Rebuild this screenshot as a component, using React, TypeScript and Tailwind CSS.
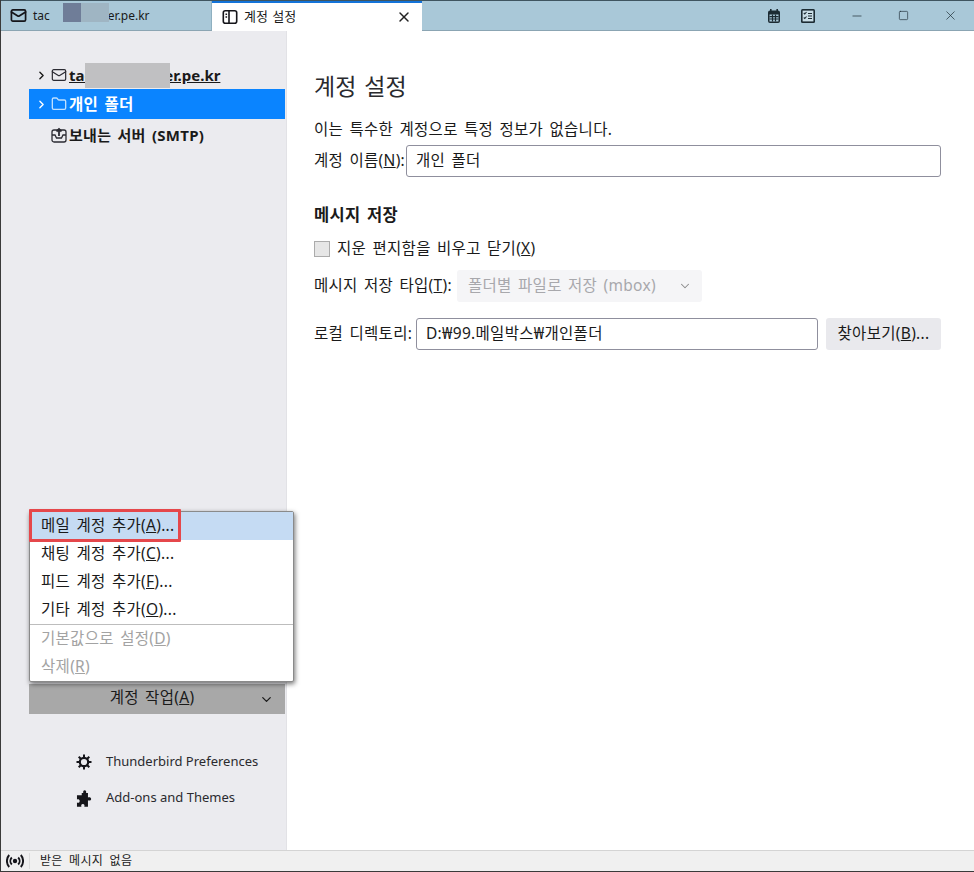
import { ChevronDown, ChevronRight, Folder, Mail, Minus, Square, X } from "lucide-react";

const FONT = "font-['Noto_Sans','Noto_Sans_CJK_KR',sans-serif]";

function CalendarIcon() {
  return (
    <svg width="16" height="16" viewBox="0 0 16 16" fill="none">
      <path d="M2 4.5a2 2 0 0 1 2-2h8a2 2 0 0 1 2 2V13a2 2 0 0 1-2 2H4a2 2 0 0 1-2-2z" fill="#1c2b33" />
      <rect x="4" y="1" width="1.6" height="3" fill="#1c2b33" />
      <rect x="10.4" y="1" width="1.6" height="3" fill="#1c2b33" />
      <path d="M3.5 6.5h9v7h-9z" fill="#a9c8d8" />
      <path d="M3.5 8.7h9M3.5 11h9M6.5 6.5v7M9.5 6.5v7" stroke="#1c2b33" strokeWidth="1.2" />
    </svg>
  );
}

function TasksIcon() {
  return (
    <svg width="16" height="16" viewBox="0 0 16 16" fill="none">
      <rect x="1" y="1" width="14" height="14" rx="1.5" fill="#1c2b33" />
      <rect x="2.6" y="2.6" width="10.8" height="10.8" fill="#c9dde6" />
      <path d="M3.8 5l1 1 1.7-2M3.8 9.5l1 1 1.7-2" stroke="#1c2b33" strokeWidth="1.1" />
      <path d="M8 5.5h4M8 8h4M8 10.5h4" stroke="#1c2b33" strokeWidth="1.1" />
    </svg>
  );
}

function SettingsTabIcon() {
  return (
    <svg width="16" height="16" viewBox="0 0 16 16" fill="none" stroke="#15151a" strokeWidth="1.6">
      <rect x="1.3" y="1.8" width="13.4" height="12.4" rx="2" />
      <path d="M7 2v12M3.5 5.2h1.6M3.5 8h1.6" />
    </svg>
  );
}

function OutboxIcon() {
  return (
    <svg width="16" height="16" viewBox="0 0 16 16" fill="none" stroke="#2b2b33" strokeWidth="1.3">
      <rect x="1" y="3" width="14" height="12" rx="2" />
      <path d="M1 8h3l1.500 3h5L12 8h3" />
      <path d="M8 9V2M5.500 4.500L8 2l2.500 2.500" strokeWidth="1.8" />
    </svg>
  );
}

function GearIcon() {
  return (
    <svg width="16" height="16" viewBox="0 0 16 16" fill="none">
      <circle cx="8" cy="8" r="4.2" stroke="#15151a" strokeWidth="2.2" />
      <path d="M8 .5v3M8 12.500v3M.5 8h3M12.500 8h3M2.700 2.700l2.100 2.100M11.200 11.200l2.100 2.100M2.700 13.300l2.100-2.100M11.200 4.800l2.100-2.100" stroke="#15151a" strokeWidth="2" />
    </svg>
  );
}

function PuzzleIcon() {
  return (
    <svg width="16" height="17" viewBox="0.5 0.3 13 15" fill="#15151a">
      <path d="M5 3h1.400C6 1.800 6.400.5 7.600.5S9.200 1.800 8.800 3H10.500v4c1.200-.5 2.800-.2 2.800 1.200s-1.600 1.700-2.800 1.200V15H7.300c.4-1.200 0-2.300-1.300-2.300S4.300 13.800 4.700 15H.8v-3.600c1 .4 2.400.2 2.400-1.400S1.800 8.100.8 8.600V5H5z" />
    </svg>
  );
}

function SignalIcon() {
  return (
    <svg width="18" height="16" viewBox="0 0 18 16" fill="none" stroke="#15151a" strokeWidth="1.9">
      <circle cx="9" cy="8" r="2.200" fill="#15151a" stroke="none" />
      <path d="M5.800 4.500a5 5 0 0 0 0 7M12.200 4.500a5 5 0 0 1 0 7M3.200 2a9 9 0 0 0 0 12M14.800 2a9 9 0 0 1 0 12" />
    </svg>
  );
}

function MenuItem({ label, mnemonic, tail, disabled, active }: { label: string; mnemonic: string; tail?: string; disabled?: boolean; active?: boolean }) {
  return (
    <div className={`flex h-[28px] items-center whitespace-pre pl-[11px] ${disabled ? "text-[#a3a3a3]" : "text-[#1a1a1a]"} ${active ? "bg-[#c5dbf3]" : ""}`}>
      <span>{label}(<u>{mnemonic}</u>){tail}</span>
    </div>
  );
}

export default function App() {
  return (
    <div className={`${FONT} relative flex h-[872px] w-[974px] flex-col overflow-hidden border-b border-l border-[#3a3a3a] bg-white text-[15.5px] tracking-[0.3px] text-[#1a1a1a] [word-spacing:2px]`}>
      {/* tab bar */}
      <div className="flex h-[31px] shrink-0 border-b border-t border-[#3f5560] border-b-[#8ba5b3] bg-[#a9c8d8] text-[13px] tracking-normal [word-spacing:0]">
        <div className="relative flex w-[211px] items-center border-r border-[#8fb0c0] pl-[9px] text-[12px]">
          <Mail size={17} strokeWidth={2.4} color="#15151a" />
          <span className="ml-[6px]">tac</span>
          <span className="w-[58px]" />
          <span>er.pe.kr</span>
          <div className="absolute left-[62px] top-[2px] flex h-[19px] w-[46px]">
            <div className="w-[18px] bg-[#6f7d98]" />
            <div className="w-[28px] bg-[#9fb5c3]" />
          </div>
        </div>
        <div className="-mb-px flex w-[210px] items-center border-t-2 border-[#1373d9] bg-white px-[10px]">
          <SettingsTabIcon />
          <span className="ml-[6px] flex-1 [word-spacing:1px]">계정 설정</span>
          <X size={16} strokeWidth={2.2} color="#222" />
        </div>
        <div className="flex-1" />
        <div className="flex items-center gap-[18px] pr-[2px]">
          <CalendarIcon />
          <TasksIcon />
        </div>
        <div className="ml-[15px] flex items-center text-[#1c2b33]">
          <div className="flex w-[47px] justify-center"><Minus size={14} strokeWidth={1.2} /></div>
          <div className="flex w-[47px] justify-center"><Square size={11} strokeWidth={1.4} /></div>
          <div className="flex w-[47px] justify-center"><X size={15} strokeWidth={1.1} /></div>
        </div>
      </div>

      <div className="flex min-h-0 flex-1">
        {/* sidebar */}
        <aside className="flex w-[286px] shrink-0 flex-col border-r border-[#e2e2e6] bg-[#ebebef] pl-[28px] pr-[1px]">
          <div className="pt-[30px]">
            <div className="relative flex h-[28px] items-center text-[15px] font-bold tracking-normal">
              <ChevronRight size={13} strokeWidth={2.5} className="ml-[6px]" />
              <Mail size={16} strokeWidth={1.8} className="ml-[3px] text-[#2b2b33]" />
              <span className="ml-[2px] underline">tac</span>
              <span className="w-[72px]" />
              <span className="underline">er.pe.kr</span>
              <div className="absolute left-[56px] top-[2px] h-[25px] w-[85px] bg-[#c0c0c2]" />
            </div>
            <div className="flex h-[30px] items-center bg-[#0a84ff] font-bold text-white">
              <ChevronRight size={13} strokeWidth={2.5} className="ml-[6px]" />
              <Folder size={16} strokeWidth={2} className="ml-[3px] text-[#bfe0ff]" />
              <span className="ml-[2px] pt-[2px]">개인 폴더</span>
            </div>
            <div className="flex h-[32px] items-center text-[15px] font-bold tracking-[0.3px]">
              <span className="ml-[22px]"><OutboxIcon /></span>
              <span className="ml-[2px]">보내는 서버 (SMTP)</span>
            </div>
          </div>
          <div className="flex-1" />
          <div className="flex h-[30px] w-[256px] items-center bg-[#a8a8a8] pr-[11px]">
            <span className="flex-1 pb-[2px] pl-[16px] text-center">계정 작업(<u>A</u>)</span>
            <ChevronDown size={15} strokeWidth={2} />
          </div>
          <div className="mt-[30px] flex h-[36px] items-center pl-[47px] text-[13px] tracking-normal text-[#2a2a2e] [word-spacing:0]">
            <GearIcon />
            <span className="ml-[14px]">Thunderbird Preferences</span>
          </div>
          <div className="flex h-[36px] items-center pl-[47px] text-[13px] tracking-normal text-[#2a2a2e] [word-spacing:0]">
            <PuzzleIcon />
            <span className="ml-[14px]">Add-ons and Themes</span>
          </div>
          <div className="h-[34px]" />
        </aside>

        {/* settings page */}
        <main className="flex-1 pl-[27px] pr-[33px] pt-[38px]">
          <h1 className="h-[34px] text-[23px] leading-[34px] tracking-normal text-[#2a2a2e]">계정 설정</h1>
          <p className="mt-[15px] h-[22px] leading-[22px]">이는 특수한 계정으로 특정 정보가 없습니다.</p>
          <div className="mt-[5px] flex h-[32px] items-center">
            <span className="w-[92px] whitespace-nowrap">계정 이름(<u>N</u>):</span>
            <div className="flex h-full flex-1 items-center rounded-[3px] border border-[#8f8f9d] pl-[9px]">개인 폴더</div>
          </div>
          <h2 className="mt-[26px] h-[24px] text-[16.5px] font-bold leading-[24px]">메시지 저장</h2>
          <div className="mt-[10px] flex h-[24px] items-center">
            <span className="h-[16px] w-[16px] border border-[#ababab] bg-[#e6e6e6]" />
            <span className="ml-[7px]">지운 편지함을 비우고 닫기(<u>X</u>)</span>
          </div>
          <div className="mt-[9px] flex h-[32px] items-center">
            <span className="w-[143px] whitespace-nowrap">메시지 저장 타입(<u>T</u>):</span>
            <div className="flex h-full w-[245px] items-center justify-between rounded-[3px] bg-[#f5f5f7] pl-[11px] pr-[10px] text-[#a8a8ac]">
              <span>폴더별 파일로 저장 (mbox)</span>
              <ChevronDown size={14} strokeWidth={1.8} color="#8a8a8a" />
            </div>
          </div>
          <div className="mt-[16px] flex h-[32px] items-center">
            <span className="w-[102px] whitespace-nowrap">로컬 디렉토리:</span>
            <div className="flex h-full flex-1 items-center rounded-[3px] border border-[#8f8f9d] pl-[9px]">D:₩99.메일박스₩개인폴더</div>
            <div className="ml-[8px] flex h-full w-[115px] items-center justify-center rounded-[3px] bg-[#e9e9ed]">찾아보기(<u>B</u>)...</div>
          </div>
        </main>
      </div>

      {/* status bar */}
      <div className="flex h-[21px] shrink-0 items-center border-t border-[#d4d4d4] bg-[#f0f0f0] text-[12px] [word-spacing:3px]">
        <div className="flex w-[29px] justify-center border-r border-[#dcdcdc]"><SignalIcon /></div>
        <span className="ml-[10px]">받은 메시지 없음</span>
      </div>

      {/* account actions menu */}
      <div className="absolute left-[28px] top-[511px] w-[265px] rounded-[2px] border border-[#8a8a8a] bg-white shadow-[1px_2px_5px_rgba(0,0,0,0.55)]">
        <MenuItem label="메일 계정 추가" mnemonic="A" tail="..." active />
        <MenuItem label="채팅 계정 추가" mnemonic="C" tail="..." />
        <MenuItem label="피드 계정 추가" mnemonic="F" tail="..." />
        <MenuItem label="기타 계정 추가" mnemonic="O" tail="..." />
        <div className="border-t border-[#bdbdbd]" />
        <MenuItem label="기본값으로 설정" mnemonic="D" disabled />
        <MenuItem label="삭제" mnemonic="R" disabled />
      </div>
      {/* red annotation box */}
      <div className="absolute left-[28px] top-[509px] h-[33px] w-[152px] rounded-[1px] border-[3px] border-[#e5474b]" />
    </div>
  );
}
